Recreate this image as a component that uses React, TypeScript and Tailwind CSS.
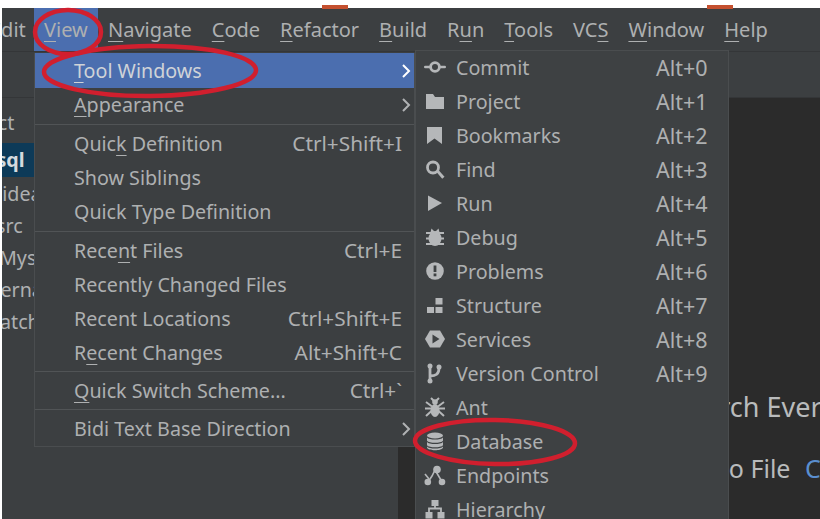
import type { ReactNode } from "react";

const font = { fontFamily: '"Noto Sans", "Open Sans", sans-serif' };

const Mn = ({ children }: { children: ReactNode }) => (
  <span className="underline decoration-1 underline-offset-[4px]">{children}</span>
);

const Chevron = () => (
  <svg width="12" height="16" viewBox="0 0 12 16" fill="none" stroke="currentColor" strokeWidth="2">
    <path d="M3 2l6 6-6 6" />
  </svg>
);

const icons: Record<string, ReactNode> = {
  commit: (
    <>
      <rect x="0" y="8.7" width="22" height="2.6" rx="1.3" />
      <circle cx="11" cy="10" r="4.4" fill="#3e4143" stroke="currentColor" strokeWidth="2.8" />
    </>
  ),
  project: <path d="M2 3h7l2 3h9v12H2z" />,
  bookmark: <path d="M3 2h15v17l-7.5-5.5L3 19z" />,
  find: (
    <>
      <circle cx="9" cy="8.5" r="5.5" fill="none" stroke="currentColor" strokeWidth="2.8" />
      <path d="M12.5 13l2.2-1.8 5.8 6.5-2.3 2z" />
    </>
  ),
  run: <path d="M4 2.5L18 10 4 18z" />,
  debug: (
    <>
      <ellipse cx="11" cy="11.5" rx="6.5" ry="7.5" />
      <path d="M2 6l18 0M2 11.5h18M2 17h18" stroke="currentColor" strokeWidth="2" />
      <path d="M7.5 1.5L11 5l3.5-3.5L16 7H6z" />
    </>
  ),
  problems: (
    <>
      <circle cx="11" cy="10" r="8.8" />
      <rect x="9.6" y="4.5" width="2.8" height="6.5" fill="#3e4143" />
      <rect x="9.6" y="12.5" width="2.8" height="2.8" fill="#3e4143" />
    </>
  ),
  structure: (
    <>
      <rect x="11.5" y="3" width="7" height="6.5" />
      <rect x="3" y="12" width="7" height="6" />
      <rect x="11.5" y="12" width="7" height="6" />
    </>
  ),
  services: (
    <>
      <path d="M6 1.5h10L21 10l-5 8.5H6L1 10z" />
      <path d="M8.5 5.5L15.5 10l-7 4.5z" fill="#3e4143" />
    </>
  ),
  vcs: (
    <>
      <path d="M6 3v15M6 13c6 0 9-2 9-8" fill="none" stroke="currentColor" strokeWidth="2.8" />
      <circle cx="6" cy="3" r="2.5" />
      <circle cx="6" cy="18" r="2.5" />
      <circle cx="15" cy="4" r="2.5" />
    </>
  ),
  ant: (
    <>
      <circle cx="11" cy="5" r="2.8" />
      <ellipse cx="11" cy="13.5" rx="4.5" ry="6.5" />
      <path
        d="M7 1l3 3M15 1l-3 3M2 5l6 4.5M20 5l-6 4.5M1 11.5h20M2 19l5.5-5M20 19l-5.5-5"
        fill="none"
        stroke="currentColor"
        strokeWidth="2"
      />
    </>
  ),
  database: (
    <>
      <ellipse cx="11" cy="4.5" rx="8" ry="3" />
      <path d="M3 6.5c2 2.7 14 2.7 16 0v3.2c-2 2.7-14 2.7-16 0zM3 11c2 2.7 14 2.7 16 0v3.2c-2 2.7-14 2.7-16 0zM3 15.5c2 2.7 14 2.7 16 0v1c-1 3.7-15 3.7-16 0z" />
    </>
  ),
  endpoints: (
    <>
      <path d="M4 17l4-6 3-6 6 10M11 5l-3 6" fill="none" stroke="currentColor" strokeWidth="1.6" />
      <circle cx="13" cy="4.5" r="3.8" />
      <circle cx="3.8" cy="17" r="3.3" />
      <circle cx="18" cy="17" r="3.3" />
      <path d="M1 9l4 5" stroke="currentColor" strokeWidth="1.6" />
    </>
  ),
  hierarchy: (
    <>
      <rect x="7.5" y="1" width="7" height="6" />
      <rect x="1.5" y="13" width="7" height="6.5" />
      <rect x="13.5" y="13" width="7" height="6.5" />
      <path d="M5 13V9.5h12V13M11 7v3" fill="none" stroke="currentColor" strokeWidth="1.8" />
    </>
  ),
};

const tools = [
  { icon: "commit", label: "Commit", keys: "Alt+0" },
  { icon: "project", label: "Project", keys: "Alt+1" },
  { icon: "bookmark", label: "Bookmarks", keys: "Alt+2" },
  { icon: "find", label: "Find", keys: "Alt+3" },
  { icon: "run", label: "Run", keys: "Alt+4" },
  { icon: "debug", label: "Debug", keys: "Alt+5" },
  { icon: "problems", label: "Problems", keys: "Alt+6" },
  { icon: "structure", label: "Structure", keys: "Alt+7" },
  { icon: "services", label: "Services", keys: "Alt+8" },
  { icon: "vcs", label: "Version Control", keys: "Alt+9" },
  { icon: "ant", label: "Ant" },
  { icon: "database", label: "Database" },
  { icon: "endpoints", label: "Endpoints" },
  { icon: "hierarchy", label: "Hierarchy" },
];

const MenuRow = ({
  children,
  keys,
  arrow,
  active,
}: {
  children: ReactNode;
  keys?: string;
  arrow?: boolean;
  active?: boolean;
}) => (
  <div
    className={`flex items-center pl-[39px] pr-[12px] ${active ? "h-[35px] bg-[#4b6eaf] text-[#cfd3d8]" : "h-[34px]"}`}
  >
    <span className="flex-1 whitespace-nowrap">{children}</span>
    {keys && <span className="whitespace-nowrap text-[20.8px]">{keys}</span>}
    {arrow && (
      <span className={`-mr-[10px] ${active ? "text-white" : "text-[#b0b2b4]"}`}>
        <Chevron />
      </span>
    )}
  </div>
);

const Sep = ({ tight }: { tight?: boolean }) => (
  <div className={`h-px bg-[#515456] ${tight ? "mb-[2px] mt-px" : "my-[2px]"}`} />
);

export default function App() {
  return (
    <div
      className="relative flex h-[519px] w-[820px] flex-col overflow-hidden bg-white pl-[2px] pt-[8px] text-[19.7px] text-[#aeb0b1]"
      style={font}
    >
      {/* bits of the window above the crop */}
      <div className="absolute left-[322px] top-[5px] h-[4px] w-[26px] bg-[#c4502f]" />
      <div className="absolute left-[707px] top-[5px] h-[4px] w-[26px] bg-[#c4502f]" />

      {/* menu bar */}
      <div className="flex h-[44px] shrink-0 items-center whitespace-nowrap border-b border-[#343638] bg-[#3c3f41] text-[20px]">
        <span className="-ml-[12px] w-[44px]">Edit</span>
        <div className="flex h-full w-[64px] items-center bg-[#4b6eaf] pl-[10px]">
          <span>
            <Mn>V</Mn>iew
          </span>
        </div>
        <div className="ml-[10px] flex gap-[20px]">
          <span>
            <Mn>N</Mn>avigate
          </span>
          <span>
            <Mn>C</Mn>ode
          </span>
          <span>
            <Mn>R</Mn>efactor
          </span>
          <span>
            <Mn>B</Mn>uild
          </span>
          <span>
            R<Mn>u</Mn>n
          </span>
          <span>
            <Mn>T</Mn>ools
          </span>
          <span>
            VC<Mn>S</Mn>
          </span>
          <span>
            <Mn>W</Mn>indow
          </span>
          <span>
            <Mn>H</Mn>elp
          </span>
        </div>
      </div>

      {/* toolbar */}
      <div className="h-[46px] shrink-0 border-b border-[#343638] bg-[#3c3f41]" />

      <div className="flex min-h-0 flex-1">
        {/* project tree, mostly hidden by the menu */}
        <div className="w-[396px] shrink-0 overflow-hidden whitespace-nowrap bg-[#3c3f41] pt-[9px]">
          <div className="flex h-[32px] items-center">
            <span className="-ml-[52px]">Project</span>
          </div>
          <div className="mt-[4px] flex h-[34px] items-center bg-[#0d3a58] font-bold text-[#d5dade]">
            <span className="-ml-[36px]">mysql</span>
          </div>
          <div className="mt-px flex h-[32px] items-center">
            <span className="-ml-[5px]">.idea</span>
          </div>
          <div className="flex h-[32px] items-center">
            <span className="-ml-[6px]">src</span>
          </div>
          <div className="flex h-[32px] items-center">
            <span className="-ml-[3px]">Mysql</span>
          </div>
          <div className="flex h-[32px] items-center">
            <span className="-ml-[30px]">External Libraries</span>
          </div>
          <div className="flex h-[32px] items-center">
            <span className="-ml-[30px]">Scratches and Consoles</span>
          </div>
        </div>

        {/* editor hints */}
        <div className="min-w-0 flex-1 overflow-hidden whitespace-nowrap bg-[#2b2b2b] pt-[291px] text-[#b9bbbc]">
          <div className="ml-[276px] h-[63px] text-[27px] leading-[36px]">Search Everywhere</div>
          <div className="ml-[282px] text-[25px] leading-[33px]">
            Go to File <span className="ml-[8px] text-[#5a8fd0]">Ctrl+Shift+N</span>
          </div>
        </div>
      </div>

      {/* View menu */}
      <div className="absolute left-[34px] top-[53px] w-[381px] border border-t-0 border-[#4a4d4f] bg-[#3c3f41]">
        <MenuRow arrow active>
          <Mn>T</Mn>ool Windows
        </MenuRow>
        <MenuRow arrow>
          <Mn>A</Mn>ppearance
        </MenuRow>
        <Sep />
        <MenuRow keys="Ctrl+Shift+I">
          Quic<Mn>k</Mn> Definition
        </MenuRow>
        <MenuRow>Show Siblings</MenuRow>
        <MenuRow>Quick Type Definition</MenuRow>
        <Sep />
        <MenuRow keys="Ctrl+E">
          Rece<Mn>n</Mn>t Files
        </MenuRow>
        <MenuRow>Recently Changed Files</MenuRow>
        <MenuRow keys="Ctrl+Shift+E">Recent Locations</MenuRow>
        <MenuRow keys="Alt+Shift+C">
          R<Mn>e</Mn>cent Changes
        </MenuRow>
        <Sep tight />
        <MenuRow keys="Ctrl+`">
          <Mn>Q</Mn>uick Switch Scheme...
        </MenuRow>
        <Sep tight />
        <MenuRow arrow>Bidi Text Base Direction</MenuRow>
      </div>

      {/* Tool Windows submenu */}
      <div className="absolute left-[415px] top-[50px] w-[314px] border border-[#4a4d4f] bg-[#3e4143]">
        {tools.map((t) => (
          <div key={t.label} className="flex h-[34px] items-center">
            <svg
              width="22"
              height="22"
              viewBox="0 0 22 22"
              fill="currentColor"
              className="ml-[8px] text-[#b5b7b9]"
            >
              {icons[t.icon]}
            </svg>
            <span className="ml-[10px] w-[200px] whitespace-nowrap">{t.label}</span>
            {t.keys && <span className="text-[21.5px]">{t.keys}</span>}
          </div>
        ))}
      </div>

      {/* hand drawn red marks */}
      <svg
        width="820"
        height="519"
        className="pointer-events-none absolute left-0 top-0"
        fill="none"
        stroke="#d11f2e"
        strokeWidth="4.5"
      >
        <ellipse cx="68" cy="32" rx="33" ry="22" />
        <ellipse cx="150" cy="71" rx="106" ry="25" transform="rotate(-0.5 150 71)" />
        <ellipse cx="495" cy="442" rx="80" ry="22" transform="rotate(1 495 442)" />
      </svg>
    </div>
  );
}
